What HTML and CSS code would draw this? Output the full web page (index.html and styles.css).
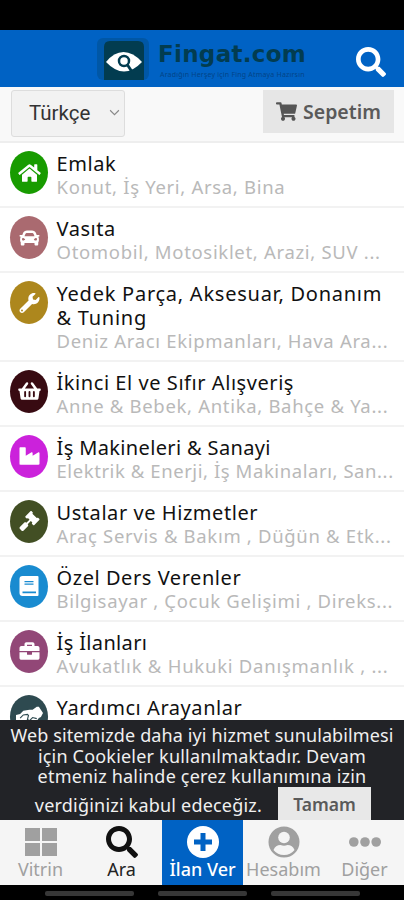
FILE: index.html
```html
<!DOCTYPE html>
<html lang="tr">
<head>
<meta charset="utf-8">
<title>Fingat.com</title>
<link rel="stylesheet" href="styles.css">
</head>
<body>
<div class="status"></div>
<header class="header">
  <div class="brand">
    <svg class="logo" viewBox="0 0 52 42"><rect width="52" height="42" rx="6" fill="#0057a6"/><path d="M7 42V9q0-6 6-6h28q6 0 6 6v33z" fill="#023c50"/><path d="M9 24Q17 14 26.500 14T45 24Q36 33.500 27 33.500T9 24z" fill="#fff"/><circle cx="27" cy="23" r="5" fill="none" stroke="#023c50" stroke-width="2.500"/><path d="M30.500 27l4 6" stroke="#023c50" stroke-width="2.800"/></svg>
    <div class="brand-text">
      <div class="brand-name"><span>Fingat.com</span></div>
      <div class="tagline">Aradığın Herşey için Fing Atmaya Hazırsın</div>
    </div>
  </div>
  <svg class="search" viewBox="0 0 512 512"><use href="#i-search"/></svg>
</header>
<div class="toolbar">
  <div class="select"><span>Türkçe</span><svg class="chev" viewBox="0 0 10 7"><path d="M1 1l4 4 4-4" fill="none" stroke="#888" stroke-width="1"/></svg></div>
  <div class="cart"><svg viewBox="0 0 576 512"><path d="M528.12 301.319l47.273-208C578.806 78.301 567.391 64 551.99 64H159.208l-9.166-44.81C147.758 8.021 137.93 0 126.529 0H24C10.745 0 0 10.745 0 24v16c0 13.255 10.745 24 24 24h69.883l70.248 343.435C147.325 417.1 136 435.222 136 456c0 30.928 25.072 56 56 56s56-25.072 56-56c0-15.674-6.447-29.835-16.824-40h209.647C430.447 426.165 424 440.326 424 456c0 30.928 25.072 56 56 56s56-25.072 56-56c0-22.172-12.888-41.332-31.579-50.405l5.517-24.276c3.413-15.018-8.002-29.319-23.403-29.319H218.117l-6.545-32h293.145c11.206 0 20.92-7.754 23.403-18.681z"/></svg><span>Sepetim</span></div>
</div>
<main class="list">
  <div class="row"><div class="dot green"><svg viewBox="0 0 576 512"><path d="M280.37 148.26L96 300.11V464a16 16 0 0 0 16 16l112.06-.29a16 16 0 0 0 15.92-16V368a16 16 0 0 1 16-16h64a16 16 0 0 1 16 16v95.64a16 16 0 0 0 16 16.05L464 480a16 16 0 0 0 16-16V300L295.67 148.26a12.19 12.19 0 0 0-15.3 0zM571.6 251.47L488 182.56V44.05a12 12 0 0 0-12-12h-56a12 12 0 0 0-12 12v72.61L318.47 43a48 48 0 0 0-61 0L4.34 251.47a12 12 0 0 0-1.6 16.9l25.5 31A12 12 0 0 0 45.15 301l235.22-193.74a12.19 12.19 0 0 1 15.3 0L530.9 301a12 12 0 0 0 16.9-1.6l25.5-31a12 12 0 0 0-1.7-16.93z"/></svg></div><div class="text"><h2>Emlak</h2><p>Konut, İş Yeri, Arsa, Bina</p></div></div>
  <div class="row"><div class="dot rose"><svg viewBox="0 0 512 512"><path d="M499.99 176h-59.87l-16.64-41.6C406.38 91.63 365.57 64 319.5 64h-127c-46.06 0-86.88 27.63-103.99 70.4L71.87 176H12.01C4.2 176-1.53 183.34.37 190.91l6 24C7.7 220.25 12.5 224 18.01 224h20.07C24.65 235.73 16 252.78 16 272v48c0 16.12 6.16 30.67 16 41.93V416c0 17.67 14.33 32 32 32h32c17.67 0 32-14.33 32-32v-32h256v32c0 17.67 14.33 32 32 32h32c17.67 0 32-14.33 32-32v-54.07c9.84-11.25 16-25.8 16-41.93v-48c0-19.22-8.65-36.27-22.07-48H494c5.51 0 10.31-3.75 11.64-9.09l6-24c1.89-7.57-3.84-14.91-11.65-14.91zm-352.06-17.83c7.29-18.22 24.94-30.17 44.57-30.17h127c19.63 0 37.28 11.95 44.57 30.17L384 208H128l19.93-49.83zM96 319.8c-19.2 0-32-12.76-32-31.9S76.8 256 96 256s48 28.71 48 47.85-28.8 15.95-48 15.95zm320 0c-19.2 0-48 3.19-48-15.95S396.8 256 416 256s32 12.76 32 31.9-12.8 31.9-32 31.9z"/></svg></div><div class="text"><h2>Vasıta</h2><p>Otomobil, Motosiklet, Arazi, SUV ...</p></div></div>
  <div class="row tall"><div class="dot gold"><svg viewBox="0 0 512 512"><path d="M507.73 109.1c-2.24-9.03-13.54-12.09-20.12-5.51l-74.36 74.36-67.88-11.31-11.31-67.88 74.36-74.36c6.62-6.62 3.43-17.9-5.66-20.16-47.38-11.74-99.55.91-136.58 37.93-39.64 39.64-50.55 97.1-34.05 147.2L18.74 402.76c-24.99 24.99-24.99 65.51 0 90.5 24.99 24.99 65.51 24.99 90.5 0l213.21-213.21c50.12 16.71 107.47 5.68 147.37-34.22 37.07-37.07 49.7-89.32 37.91-136.73zM64 472a24 24 0 1 1 0-48 24 24 0 0 1 0 48z"/></svg></div><div class="text"><h2 class="wide">Yedek Parça, Aksesuar, Donanım<br>&amp; Tuning</h2><p>Deniz Aracı Ekipmanları, Hava Ara...</p></div></div>
  <div class="row"><div class="dot dark"><svg viewBox="0 0 576 512"><path d="M576 216v16c0 13.255-10.745 24-24 24h-8l-26.113 182.788C514.509 462.435 494.257 480 470.37 480H105.63c-23.887 0-44.139-17.565-47.518-41.212L32 256h-8c-13.255 0-24-10.745-24-24v-16c0-13.255 10.745-24 24-24h67.341l106.78-146.821c10.395-14.292 30.407-17.453 44.701-7.058 14.293 10.395 17.453 30.408 7.058 44.701L170.477 192h235.046L326.12 82.821c-10.395-14.292-7.234-34.306 7.059-44.701 14.291-10.395 34.306-7.235 44.701 7.058L484.659 192H552c13.255 0 24 10.745 24 24zM312 392V280a24 24 0 0 0-48 0v112a24 24 0 0 0 48 0zm112 0V280a24 24 0 0 0-48 0v112a24 24 0 0 0 48 0zm-224 0V280a24 24 0 0 0-48 0v112a24 24 0 0 0 48 0z"/></svg></div><div class="text"><h2>İkinci El ve Sıfır Alışveriş</h2><p>Anne &amp; Bebek, Antika, Bahçe &amp; Ya...</p></div></div>
  <div class="row"><div class="dot magenta"><svg viewBox="0 0 512 512"><path d="M475.115 163.781L336 252.309v-68.28c0-18.916-20.931-30.399-36.885-20.248L160 252.309V56c0-13.255-10.745-24-24-24H24C10.745 32 0 42.745 0 56v400c0 13.255 10.745 24 24 24h464c13.255 0 24-10.745 24-24V184.029c0-18.917-20.931-30.399-36.885-20.248z"/></svg></div><div class="text"><h2 class="tight">İş Makineleri &amp; Sanayi</h2><p class="tight">Elektrik &amp; Enerji, İş Makinaları, San...</p></div></div>
  <div class="row"><div class="dot olive"><svg viewBox="0 0 512 512"><path d="M504.971 199.362l-22.627-22.627c-9.373-9.373-24.569-9.373-33.941 0l-5.657 5.657L329.608 69.255l5.657-5.657c9.373-9.373 9.373-24.569 0-33.941L312.638 7.029c-9.373-9.373-24.569-9.373-33.941 0L154.246 131.48c-9.373 9.373-9.373 24.569 0 33.941l22.627 22.627c9.373 9.373 24.569 9.373 33.941 0l5.657-5.657 39.598 39.598-81.04 81.04-5.657-5.657c-12.497-12.497-32.758-12.497-45.255 0L9.373 412.118c-12.497 12.497-12.497 32.758 0 45.255l45.255 45.255c12.497 12.497 32.758 12.497 45.255 0l114.745-114.745c12.497-12.497 12.497-32.758 0-45.255l-5.657-5.657 81.04-81.04 39.598 39.598-5.657 5.657c-9.373 9.373-9.373 24.569 0 33.941l22.627 22.627c9.373 9.373 24.569 9.373 33.941 0l124.451-124.451c9.372-9.372 9.372-24.568 0-33.941z"/></svg></div><div class="text"><h2>Ustalar ve Hizmetler</h2><p>Araç Servis &amp; Bakım , Düğün &amp; Etk...</p></div></div>
  <div class="row"><div class="dot blue"><svg viewBox="0 0 20 20"><path fill-rule="evenodd" d="M3 0h15q1 0 1 1v18q0 1-1 1H3q-3 0-3-3V3q0-3 3-3zM5 5v1.300h9V5zM5 7.500v1.300h9V7.500zM3 15.500v1.800h13.500v-1.800z"/></svg></div><div class="text"><h2>Özel Ders Verenler</h2><p>Bilgisayar , Çocuk Gelişimi , Direks...</p></div></div>
  <div class="row"><div class="dot plum"><svg viewBox="0 0 512 512"><path d="M320 336c0 8.840-7.160 16-16 16h-96c-8.840 0-16-7.160-16-16v-48H0v144c0 25.600 22.400 48 48 48h416c25.600 0 48-22.400 48-48V288H320v48zm144-208h-80V80c0-25.600-22.400-48-48-48H176c-25.600 0-48 22.400-48 48v48H48c-25.600 0-48 22.400-48 48v80h512v-80c0-25.600-22.400-48-48-48zm-144 0H192V96h128v32z"/></svg></div><div class="text"><h2 class="tight">İş İlanları</h2><p class="wide">Avukatlık &amp; Hukuki Danışmanlık , ...</p></div></div>
  <div class="row"><div class="dot teal"><svg class="hands" viewBox="0 0 26 20"><path d="M0 9l4-1 3-3 6-1 3 0 4-3 2 0 4 6-2 4-2 1-3 4-8 3H0z"/><path d="M4 12l3-3 4-.5 1 1-1 4 2 1 3-3 4 1" fill="none" stroke="#2e4a50" stroke-width="1.100"/></svg></div><div class="text"><h2>Yardımcı Arayanlar</h2></div></div>
</main>
<section class="cookie">
  <p><span class="first">Web sitemizde daha iyi hizmet sunulabilmesi</span><br><span>için Cookieler kullanılmaktadır. Devam</span><br><span>etmeniz halinde çerez kullanımına izin</span></p>
  <div class="accept"><span>verdiğinizi kabul edeceğiz.</span><button>Tamam</button></div>
</section>
<nav class="nav">
  <a><svg viewBox="0 0 32 32"><path d="M0 2h15v13H0zM17 2h15v13H17zM0 17h15v13H0zM17 17h15v13H17z"/></svg><span>Vitrin</span></a>
  <a class="on"><svg viewBox="0 0 512 512"><path id="i-search" d="M505 442.700L405.300 343c-4.500-4.500-10.600-7-17-7H372c27.600-35.300 44-79.700 44-128C416 93.100 322.900 0 208 0S0 93.100 0 208s93.100 208 208 208c48.300 0 92.700-16.400 128-44v16.300c0 6.400 2.500 12.500 7 17l99.700 99.700c9.400 9.400 24.600 9.400 33.900 0l28.300-28.300c9.400-9.400 9.400-24.600.1-34zM208 336c-70.700 0-128-57.200-128-128 0-70.700 57.200-128 128-128 70.700 0 128 57.200 128 128 0 70.700-57.200 128-128 128z"/></svg><span>Ara</span></a>
  <a class="add"><svg viewBox="0 0 32 32"><circle cx="16" cy="16" r="16"/><path d="M16 7v18M7 16h18" stroke="#0062c4" stroke-width="5"/></svg><span>İlan Ver</span></a>
  <a><svg viewBox="0 0 32 32"><circle cx="16" cy="16" r="15.500"/><circle cx="16" cy="11.500" r="5.800" fill="#f5f5f5"/><path d="M5.500 24q2-5 7-5 3.500 1.500 7 0 5 0 7 5-4 5-10.500 5T5.500 24z" fill="#f5f5f5"/></svg><span>Hesabım</span></a>
  <a><svg viewBox="0 0 32 32"><circle cx="4.800" cy="16" r="4.800"/><circle cx="16" cy="16" r="4.800"/><circle cx="27.200" cy="16" r="4.800"/></svg><span>Diğer</span></a>
</nav>
<footer class="system"><i></i><i></i><i></i></footer>
</body>
</html>
```
FILE: styles.css
```css
* { box-sizing: border-box; margin: 0; padding: 0; }
body { width: 404px; height: 900px; overflow: hidden; display: flex; flex-direction: column; background: #fff; font-family: "Noto Sans", sans-serif; }
.status { flex: 0 0 30px; background: #000; }
.header { flex: 0 0 57px; background: #0062c4; display: flex; justify-content: space-between; padding: 0 18px 0 97px; }
.brand { display: flex; padding-top: 8px; gap: 9px; }
.logo { width: 52px; height: 42px; }
.brand-name { font: bold 23px/33px "DejaVu Sans", sans-serif; height: 32px; color: #023c50; white-space: nowrap; letter-spacing: .3px; }
.tagline { font-size: 7px; line-height: 10px; padding-left: 2px; letter-spacing: .2px; color: #034487; white-space: nowrap; }
.search { width: 30px; height: 30px; margin-top: 17px; fill: #fff; }
.toolbar { flex: 0 0 56px; background: #f9f9f9; border-bottom: 2px solid #eee; display: flex; justify-content: space-between; align-items: flex-start; padding: 3px 10px 0 11px; }
.select { width: 114px; height: 47px; background: #f2f2f2; border: 1px solid #ddd; border-radius: 3px; display: flex; align-items: center; justify-content: space-between; padding: 0 4px 2px 17px; font: 20.500px Roboto, sans-serif; color: #333; }
.chev { width: 11px; height: 8px; }
.cart { width: 131px; height: 43px; background: #e6e6e6; display: flex; align-items: center; gap: 6px; padding-left: 13px; color: #5a5a5a; font-size: 19.500px; font-weight: 600; }
.cart svg { width: 21px; height: 19px; fill: #555; }
.list { flex: 0 0 577px; overflow: hidden; }
.row { height: 65px; display: flex; gap: 8.500px; padding: 8px 0 0 10px; border-bottom: 2px solid #f2f2f2; }
.row.tall { height: 88.500px; }
.dot { flex: 0 0 38px; height: 43px; border-radius: 19px / 21.500px; display: flex; align-items: center; justify-content: center; }
.dot svg { width: 23px; height: 20px; fill: #fff; }
.dot .hands { width: 27px; height: 22px; }
.green { background: #189b00; }
.rose { background: #aa6a70; }
.gold { background: #ad871d; }
.dark { background: #380b12; }
.magenta { background: #cb22db; }
.olive { background: #424f24; }
.blue { background: #198bd0; }
.plum { background: #924777; }
.teal { background: #2e4a50; }
.text h2 { font-size: 20px; line-height: 24px; font-weight: 400; color: #111; white-space: nowrap; letter-spacing: .56px; padding-top: 1px; }
.text p { font-size: 18.500px; line-height: 23px; margin-top: -1px; color: #b9b9b9; white-space: nowrap; letter-spacing: .68px; }
.text h2.wide, .text p.wide { letter-spacing: .75px; }
.text h2.tight { letter-spacing: .36px; }
.text p.tight { letter-spacing: .57px; }
.cookie { flex: 0 0 99px; background: #222327; color: #f0f0f0; font-size: 18px; line-height: 20.700px; text-align: center; white-space: nowrap; padding-top: 5px; letter-spacing: .2px; }
.first { letter-spacing: .12px; }
.accept { display: flex; justify-content: flex-end; padding-right: 33px; gap: 16px; }
.accept span { padding-top: 8px; }
.accept button { width: 93px; height: 33px; border: 0; background: #e8e8e8; color: #5a5a5a; font: 600 17.500px "Noto Sans", sans-serif; }
.nav { flex: 0 0 65px; background: #f5f5f5; display: grid; grid-template-columns: repeat(5, 81px); }
.nav a { display: flex; flex-direction: column; align-items: center; padding-top: 6px; color: #a0a0a0; font-size: 18px; line-height: 22px; white-space: nowrap; }
.nav svg { width: 32px; height: 32px; fill: #a0a0a0; }
.nav .on { color: #222; }
.nav .on svg { fill: #111; }
.nav .add { background: #0062c4; color: #fff; font-weight: 500; }
.nav .add svg { fill: #fff; }
.system { flex: 0 0 16px; background: #000; display: flex; gap: 24px; padding: 6px 0 0 45px; }
.system i { width: 89px; height: 5px; border-radius: 2px; background: #373737; }
```
